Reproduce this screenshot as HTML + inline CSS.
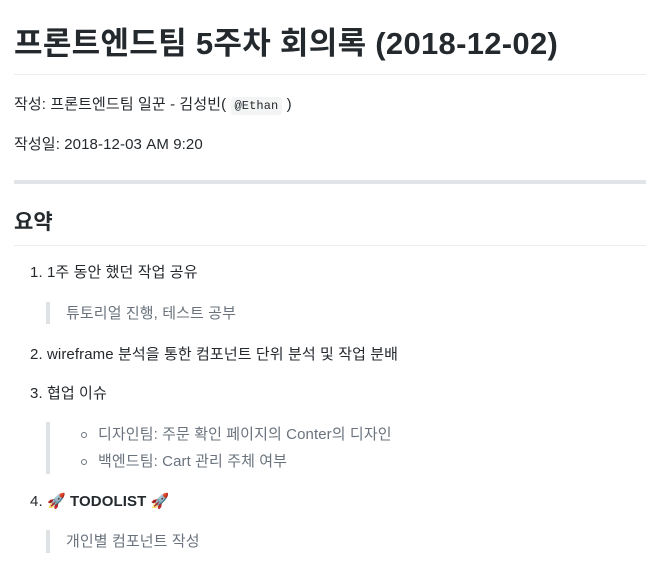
<!DOCTYPE html>
<html><head><meta charset="utf-8"><style>
body{margin:0;background:#fff;width:646px;height:578px;overflow:hidden;font-family:"Liberation Sans","Noto Sans CJK KR",sans-serif;color:#24292e;position:relative}
.a{position:absolute;white-space:nowrap;line-height:20px;font-size:15px;letter-spacing:0.1px}
h1{position:absolute;left:14px;top:24px;margin:0;font-size:31px;line-height:40px;font-weight:bold;white-space:nowrap;letter-spacing:0.3px}
.hr1{position:absolute;left:14px;right:0;top:74px;height:1px;background:#eaecef}
.hr2{position:absolute;left:14px;right:0;top:180px;height:4px;background:#e1e4e8}
.hr3{position:absolute;left:14px;right:0;top:245px;height:1px;background:#eaecef}
code{font-family:"Liberation Mono",monospace;font-size:12px;background:#f3f4f4;padding:2px 4px;border-radius:3px}
.bar{position:absolute;left:46px;width:4px;background:#dfe2e5}
.g{color:#6a737d}
.c{position:absolute;width:4px;height:4px;border:1.3px solid #6a737d;border-radius:50%}
</style></head><body>
<h1>프론트엔드팀 5주차 회의록 (2018-12-02)</h1>
<div class="hr1"></div>
<div class="a" style="left:14px;top:95px">작성: 프론트엔드팀 일꾼 - 김성빈( <code>@Ethan</code> )</div>
<div class="a" style="left:14px;top:135px">작성일: 2018-12-03 AM 9:20</div>
<div class="hr2"></div>
<div class="a" style="left:14px;top:210px;font-size:21px;line-height:26px;font-weight:bold">요약</div>
<div class="hr3"></div>
<div class="a" style="left:30px;top:263px">1. 1주 동안 했던 작업 공유</div>
<div class="bar" style="top:302px;height:22px"></div>
<div class="a g" style="left:66px;top:304px">튜토리얼 진행, 테스트 공부</div>
<div class="a" style="left:30px;top:345px">2. wireframe 분석을 통한 컴포넌트 단위 분석 및 작업 분배</div>
<div class="a" style="left:30px;top:384px">3. 협업 이슈</div>
<div class="bar" style="top:422px;height:52px"></div>
<div class="c" style="left:81px;top:432px"></div>
<div class="a g" style="left:98px;top:425px">디자인팀: 주문 확인 페이지의 Conter의 디자인</div>
<div class="c" style="left:81px;top:459px"></div>
<div class="a g" style="left:98px;top:452px">백엔드팀: Cart 관리 주체 여부</div>
<div class="a" style="left:30px;top:492px">4. 🚀 <b>TODOLIST</b> 🚀</div>
<div class="bar" style="top:530px;height:23px"></div>
<div class="a g" style="left:66px;top:532px">개인별 컴포넌트 작성</div>
</body></html>
